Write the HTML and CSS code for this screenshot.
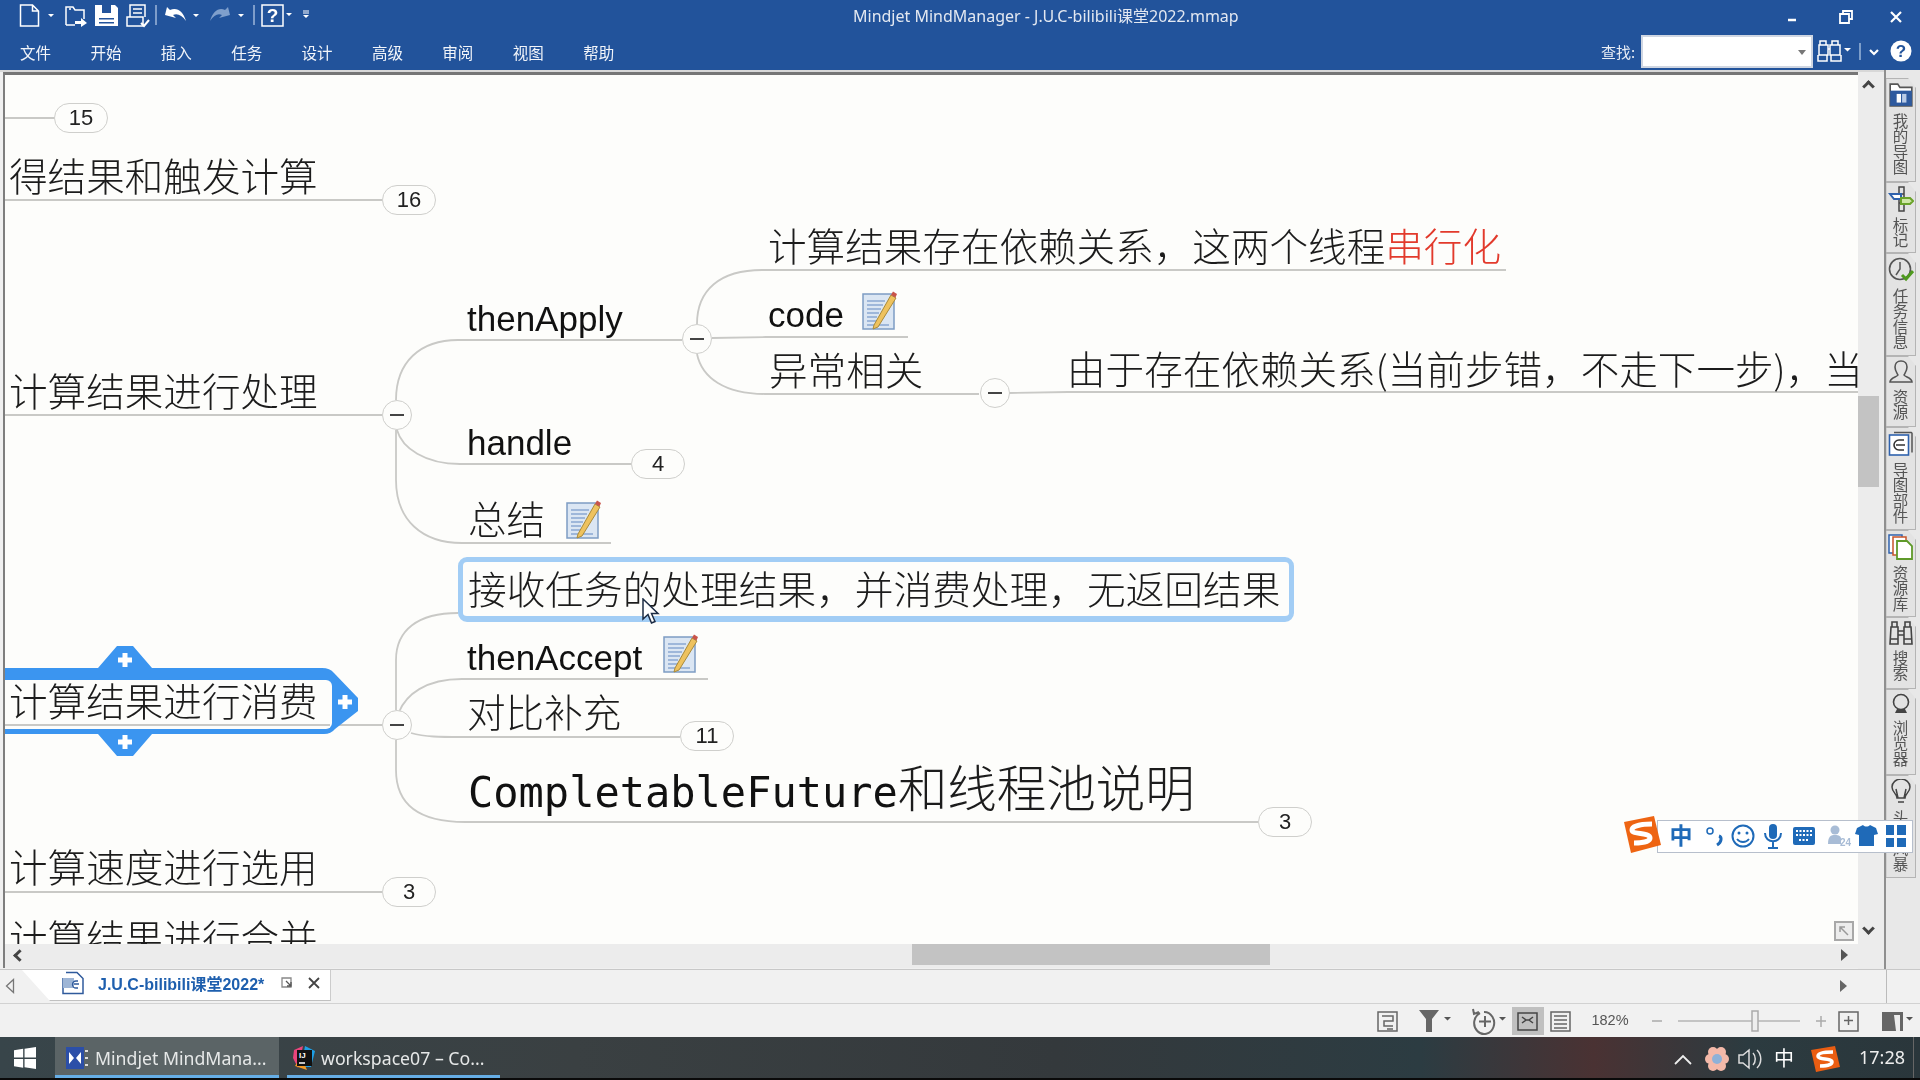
FILE: index.html
```html
<!DOCTYPE html>
<html lang="zh-CN">
<head>
<meta charset="utf-8">
<title>Mindjet MindManager</title>
<link rel="stylesheet" href="styles.css">
</head>
<body>
<svg class="defs" width="0" height="0">
  <symbol id="note" viewBox="0 0 36 40">
    <rect x="1" y="4" width="31" height="35" fill="#dbe6f3" stroke="#7d9cc4" stroke-width="1.5"/>
    <path d="M5 11h18M5 15h16M5 19h14M5 23h12M5 27h10M5 31h10M5 35h22" stroke="#8aa8d2" stroke-width="1.6"/>
    <path d="M12 35 L29 5 L34 8 L16 37 L11 39z" fill="#eec25e" stroke="#a98a3a" stroke-width="1"/>
    <path d="M29 5l2-3.500 4 2.500-1.500 3.500z" fill="#c9544a"/>
  </symbol>
</svg>
<div class="app">
  <header class="ribbon">
    <div class="ribbon-top">
      <svg class="qat" width="320" height="33" viewBox="0 0 320 33">
        <g fill="none" stroke="#fff" stroke-width="1.500">
          <path d="M20.500 5h12l6 6v15h-18zM32.500 5v6h6"/>
          <path d="M66 25V7h7l2 3h9v9M70 10v-2M66 25h9"/>
          <path d="M130 17V5h15v12M133 9h9M133 13h9"/>
          <path d="M127 17h16v9h-16z"/>
          <path d="M156 5v20M254 5v20" stroke="#9db7da"/>
          <rect x="262" y="5" width="21" height="21"/>
        </g>
        <path d="M75 21h6v-3l6 5-6 4v-3h-6z" fill="#fff"/>
        <path d="M95 5h20l3 3v18H95z" fill="#fff"/>
        <path d="M102 5h9v8h-9zM99 18h15v1.500H99zM99 22h15v1.500H99z" fill="#22539b"/>
        <path d="M141 23l3 3 5-6" fill="none" stroke="#fff" stroke-width="2"/>
        <path d="M165 15l2-8 3 3c7-3 13 1 16 11-4-6-9-8-13-6l3 3z" fill="#fff"/>
        <path d="M230 15l-2-8-3 3c-6-3-12 1-15 11 4-6 8-8 12-6l-3 3z" fill="#7f9fcc"/>
        <path d="M48 14h6l-3 3zM193 14h6l-3 3zM238 14h6l-3 3zM286 13h6l-3 3zM303 15h6l-3 3z" fill="#fff"/>
        <path d="M303 11h6M303 13h6" stroke="#fff"/>
        <text class="qat-help" x="272.500" y="22" text-anchor="middle">?</text>
      </svg>
      <div class="app-title">Mindjet MindManager - J.U.C-bilibili课堂2022.mmap</div>
      <svg class="winctl" width="127" height="33" viewBox="0 0 127 33">
        <path d="M0 20h8" stroke="#fff" stroke-width="2.500"/>
        <path d="M52 14h9v9h-9zM55 14v-3h9v8h-3" fill="none" stroke="#fff" stroke-width="1.800"/>
        <path d="M103 12l10 10M113 12l-10 10" stroke="#fff" stroke-width="2.200"/>
      </svg>
    </div>
    <div class="ribbon-menu">
      <nav class="menu">
        <span class="menu-item">文件</span><span class="menu-item">开始</span><span class="menu-item">插入</span><span class="menu-item">任务</span><span class="menu-item">设计</span><span class="menu-item">高级</span><span class="menu-item">审阅</span><span class="menu-item">视图</span><span class="menu-item">帮助</span>
      </nav>
      <div class="search">
        <span class="search-label">查找:</span>
        <div class="search-box"><span class="search-caret"></span></div>
        <svg class="search-tools" width="103" height="37" viewBox="0 0 103 37">
          <g fill="none" stroke="#fff" stroke-width="1.500">
            <path d="M3 8h6v4H3zM15 8h6v4h-6zM2 12h9v10H2zM13 12h10v10H13zM11 16h2M1 22v6h9v-6M14 22v6h10v-6"/>
            <path d="M43 10v17" stroke="#9db7da"/>
            <path d="M53 17l4 4 4-4" stroke-width="2.200"/>
          </g>
          <path d="M27 15h7l-3.500 3.500z" fill="#fff"/>
          <circle cx="84" cy="18" r="10.500" fill="#fff"/>
          <text class="help-q" x="84" y="24" text-anchor="middle">?</text>
        </svg>
      </div>
    </div>
  </header>

  <main class="main">
    <div class="workspace">
      <div class="work-left">
        <div class="canvas">
          <div class="world">
            <svg class="links" width="1920" height="1080" viewBox="0 0 1920 1080">
              <g fill="none" stroke="#c9c9c6" stroke-width="1.800">
                <path d="M5 118H55"/>
                <path d="M5 200H382"/>
                <path d="M5 415H382"/>
                <path d="M5 892H382"/>
                <path d="M338 725H382"/>
                <path d="M396 400C396 362 420 340 458 340H682"/>
                <path d="M397 430C402 448 425 464 460 464H631"/>
                <path d="M396 430V480C396 520 422 543 462 543H611"/>
                <path d="M697 324C697 290 720 270 762 270H1506"/>
                <path d="M712 338L766 337H908"/>
                <path d="M697 354C702 378 725 394 765 394H979"/>
                <path d="M1009 393L1068 392H1860"/>
                <path d="M396 710V660C396 630 418 613 458 613"/>
                <path d="M399 712C406 695 425 679 462 679H708"/>
                <path d="M411 733C425 737 440 737 462 737H680"/>
                <path d="M396 740V770C396 805 420 822 465 822H1258"/>
              </g>
              <path d="M0 668H98L117 646H133L152 668H322Q330 668 334 673L358 698V711L335 729Q331 734 324 734H152L133 756H117L98 734H0z" fill="#3b95f0"/>
              <rect x="0" y="680" width="332" height="49" rx="6" fill="#fdfdfb"/>
              <path d="M5 725H330" stroke="#c9c9c6" stroke-width="1.800"/>
              <path class="plus" d="M125 653v14M118 660h14M125 735v14M118 742h14M345 695v14M338 702h14" stroke="#fff" stroke-width="5" fill="none"/>
            </svg>

            <div class="node n-de">得结果和触发计算</div>
            <div class="node n-chuli">计算结果进行处理</div>
            <div class="node n-xiaofei">计算结果进行消费</div>
            <div class="node n-xuanyong">计算速度进行选用</div>
            <div class="node n-hebing">计算结果进行合并</div>
            <div class="node n-cunzai">计算结果存在依赖关系，这两个线程<span class="red">串行化</span></div>
            <div class="node n-yichang">异常相关</div>
            <div class="node n-youyu">由于存在依赖关系(当前步错，不走下一步)，当前步有异常的话就叫停</div>
            <div class="node n-zongjie">总结</div>
            <div class="node n-duibi">对比补充</div>
            <div class="node latin n-apply">thenApply</div>
            <div class="node latin n-code">code</div>
            <div class="node latin n-handle">handle</div>
            <div class="node latin n-accept">thenAccept</div>
            <div class="node n-future"><span class="mono">CompletableFuture</span><span class="big">和线程池说明</span></div>
            <div class="selected"><span class="node-text">接收任务的处理结果，并消费处理，无返回结果</span></div>

            <svg class="note note-code"><use href="#note"/></svg>
            <svg class="note note-zongjie"><use href="#note"/></svg>
            <svg class="note note-accept"><use href="#note"/></svg>

            <div class="pill p-15">15</div>
            <div class="pill p-16">16</div>
            <div class="pill p-4">4</div>
            <div class="pill p-11">11</div>
            <div class="pill p-3a">3</div>
            <div class="pill p-3b">3</div>

            <div class="toggle t-a"></div>
            <div class="toggle t-b"></div>
            <div class="toggle t-c"></div>
            <div class="toggle t-d"></div>

            <svg class="cursor" width="20" height="28" viewBox="0 0 20 28">
              <path d="M1 1V21L6 16.500L9.500 25L13 23.500L9.500 15.500H16z" fill="#fff" stroke="#1c2c44" stroke-width="1.500"/>
            </svg>
          </div>
          <svg class="corner" width="20" height="20" viewBox="0 0 20 20">
            <rect x="1" y="1" width="18" height="18" fill="#ececec" stroke="#a8a8a8" stroke-width="2"/>
            <path d="M14 14L6 6M6 11V6H11" fill="none" stroke="#999" stroke-width="1.500"/>
          </svg>
        </div>
        <div class="hbar">
          <span class="chev chev-l"></span>
          <div class="hthumb"></div>
          <span class="tri-r"></span>
        </div>
      </div>
      <div class="vbar">
        <span class="chev chev-u"></span>
        <div class="vthumb"></div>
        <span class="chev chev-d"></span>
      </div>
    </div>
    <aside class="dock">
      <div class="dock-tab h104">
        <svg width="26" height="26" viewBox="0 0 24 24"><path d="M2 2h7l2 3h11v17H2z" fill="#fff" stroke="#555" stroke-width="1.500"/><rect x="2" y="8" width="20" height="14" fill="#2e5a9f"/><rect x="8" y="11" width="4" height="8" fill="#fff"/><rect x="13" y="11" width="4" height="8" fill="#b9cbe6"/></svg>
        <span class="dock-label">我的导图</span>
      </div>
      <div class="dock-tab h71">
        <svg width="26" height="26" viewBox="0 0 26 26"><path d="M11 1h5v7h-5zM11 17h5v8h-5zM11 8v9M16 8v9" fill="none" stroke="#444" stroke-width="1.500"/><path d="M2 8h11v5H6z" fill="#fff" stroke="#2f62ad" stroke-width="2"/><path d="M13 12h9l3 3-3 3h-9z" fill="#cfe6a8" stroke="#6aa32a" stroke-width="2"/></svg>
        <span class="dock-label">标记</span>
      </div>
      <div class="dock-tab h103">
        <svg width="26" height="26" viewBox="0 0 26 26"><circle cx="12" cy="12" r="10.500" fill="none" stroke="#555" stroke-width="1.600"/><path d="M12 5v7l-4 6" fill="none" stroke="#555" stroke-width="1.500"/><path d="M14 18l4 4 7-8" fill="none" stroke="#4f9a1f" stroke-width="3"/></svg>
        <span class="dock-label">任务信息</span>
      </div>
      <div class="dock-tab h71">
        <svg width="26" height="24" viewBox="0 0 26 24"><path d="M13 1c4 0 6 3 6 6 0 4-2 6-3 8 1 2 8 3 8 7H2c0-4 7-5 8-7-1-2-3-4-3-8 0-3 2-6 6-6z" fill="none" stroke="#555" stroke-width="1.600"/></svg>
        <span class="dock-label">资源</span>
      </div>
      <div class="dock-tab h103">
        <svg width="26" height="26" viewBox="0 0 26 26"><rect x="1.500" y="4" width="19" height="20" fill="#fff" stroke="#2f62ad" stroke-width="1.600"/><path d="M6 1.500h18v20" fill="none" stroke="#555" stroke-width="1.500"/><path d="M16 9h-5a4 4 0 0 0 0 10h5M8 14h9" fill="none" stroke="#333" stroke-width="1.600"/></svg>
        <span class="dock-label">导图部件</span>
      </div>
      <div class="dock-tab h87">
        <svg width="26" height="26" viewBox="0 0 26 26"><rect x="1" y="1" width="13" height="18" fill="#fff" stroke="#2f62ad" stroke-width="1.500"/><rect x="5" y="3" width="13" height="18" fill="#fff" stroke="#c8542a" stroke-width="1.500"/><path d="M9 7h10l5 5v13H9z" fill="#fff" stroke="#5f9a2a" stroke-width="1.800"/></svg>
        <span class="dock-label">资源库</span>
      </div>
      <div class="dock-tab h72">
        <svg width="24" height="24" viewBox="0 0 24 24"><g fill="none" stroke="#444" stroke-width="1.600"><path d="M3 1h5v5H3zM16 1h5v5h-5zM2 6h7v17H1zM15 6h7l1 17h-8zM9 10h6M9 14h6M1 18h8M15 18h8"/></g></svg>
        <span class="dock-label">搜索</span>
      </div>
      <div class="dock-tab h86">
        <svg width="20" height="22" viewBox="0 0 20 22"><circle cx="10" cy="9" r="7.500" fill="none" stroke="#444" stroke-width="1.600"/><path d="M4 20h12l-2-4H6z" fill="#444"/></svg>
        <span class="dock-label">浏览器</span>
      </div>
      <div class="dock-tab h103">
        <svg width="20" height="26" viewBox="0 0 20 26"><path d="M6 19c0-4-5-6-5-11a9 8 0 0 1 18 0c0 5-5 7-5 11zM7 23h6M7 19l-2-9M13 19l2-9" fill="none" stroke="#444" stroke-width="1.500"/></svg>
        <span class="dock-label">头脑风暴</span>
      </div>
    </aside>
    <div class="sogou">
      <svg class="sogou-logo" width="42" height="40" viewBox="0 0 42 40">
        <path d="M3 7L33 1L40 30L10 38z" fill="#ee6412"/>
        <path d="M31 9C20 9 11 11 11 15C11 20 29 17 29 23C29 27 20 28 13 28" fill="none" stroke="#fff" stroke-width="5"/>
      </svg>
      <svg class="sogou-icons" width="256" height="32" viewBox="0 0 256 32">
        <text class="sg-zhong" x="24" y="24" text-anchor="middle">中</text>
        <circle cx="53" cy="11" r="3" fill="none" stroke="#1f6ab8" stroke-width="1.500"/>
        <path d="M62 16c3 1 3 6-2 9" fill="none" stroke="#1f6ab8" stroke-width="3"/>
        <circle cx="86" cy="16" r="10.500" fill="none" stroke="#1f6ab8" stroke-width="2"/>
        <circle cx="82" cy="13" r="1.500" fill="#1f6ab8"/><circle cx="90" cy="13" r="1.500" fill="#1f6ab8"/>
        <path d="M80 19c3 4 9 4 12 0" fill="none" stroke="#1f6ab8" stroke-width="1.800"/>
        <rect x="112" y="4" width="8" height="15" rx="4" fill="#1f6ab8"/>
        <path d="M108 13c0 11 16 11 16 0M116 22v6M111 28h10" fill="none" stroke="#1f6ab8" stroke-width="2"/>
        <rect x="136" y="7" width="22" height="18" rx="2" fill="#1f6ab8"/>
        <path d="M139 11h16M139 15h16M142 20h10" stroke="#fff" stroke-width="2" stroke-dasharray="2 1.500"/>
        <circle cx="178" cy="10" r="4.500" fill="#a8bcd6"/>
        <path d="M171 24c0-8 3-9 7-9s6 1 6 4v5z" fill="#a8bcd6"/>
        <text class="sg-num" x="183" y="26">24</text>
        <path d="M200 8l6-3c2 2 5 2 7 0l6 3 2 6-4 1v11h-15V15l-4-1z" fill="#1f6ab8"/>
        <path d="M229 5h8v10h-8zM240 5h9v10h-9zM229 18h8v9h-8zM240 18h9v9h-9z" fill="#1f6ab8"/>
      </svg>
    </div>
  </main>

  <div class="tabrow">
    <div class="tabrow-left">
      <svg class="tri-l" width="10" height="16" viewBox="0 0 10 16"><path d="M8.500 1.500L1.500 8l7 6.500z" fill="none" stroke="#777" stroke-width="1.300"/></svg>
    </div>
    <div class="doc-tab">
      <svg class="doc-icon" width="24" height="24" viewBox="0 0 24 24"><path d="M4 1.500h11l6 6v15H1V7" fill="#fff" stroke="#2f5a9c" stroke-width="1.500"/><path d="M1 7h11v10H1z" fill="#9db5d6"/><path d="M16 10h-2a3 3 0 0 0 0 7h2M12 13h5" fill="none" stroke="#2f5a9c" stroke-width="1.300"/></svg>
      <span class="doc-name">J.U.C-bilibili课堂2022*</span>
      <svg class="doc-ctl" width="44" height="14" viewBox="0 0 44 14"><path d="M1 2h9v9H1z" fill="none" stroke="#888" stroke-width="1.300"/><path d="M5 5l5 5M6 10h4V6" fill="none" stroke="#555" stroke-width="1.300"/><path d="M28 2l10 10M38 2L28 12" stroke="#444" stroke-width="1.800"/></svg>
    </div>
    <div class="tabrow-fill"></div>
    <span class="tri-r tri-tab"></span>
    <span class="tabrow-sep"></span>
  </div>

  <div class="statusbar">
    <svg class="status-tools" width="560" height="33" viewBox="0 0 560 33">
      <g fill="none" stroke="#666" stroke-width="1.500">
        <path d="M18 8h19v19H18zM22 12h11v5h-9v5h9M27 25h6"/>
        <path d="M120 9a10 11 0 1 0 4-1M113 5l1 5 5-2M125 12v11M119 17.500h12" stroke-width="2"/>
        <path d="M158 9h19v17h-19zM162 13l4 3-4 3M173 13l-4 3 4 3M166 16h3" stroke="#555"/>
        <path d="M191 8h19v19h-19zM194 12h13M194 16h13M194 20h13M194 24h13"/>
        <path d="M479 8h19v19h-19zM488.500 12v9M484 16.500h9"/>
      </g>
      <path d="M59 6h20l-7 9v13l-6 0V15z" fill="#666"/>
      <path d="M84 13h7l-3.500 3.500zM139 13h7l-3.500 3.500zM546 13h7l-3.500 3.500z" fill="#555"/>
      <rect x="152" y="3" width="32" height="28" fill="#cbcbcb" class="active-view"/>
      <text class="zoom-pct" x="250" y="21" text-anchor="middle">182%</text>
      <path d="M292 17h10M461 12v11M456 17h10" stroke="#aaa" stroke-width="1.500"/>
      <path d="M318 17H440" stroke="#b5b5b5" stroke-width="1.500"/>
      <rect x="392" y="7" width="6" height="20" fill="#eee" stroke="#aaa" stroke-width="1.500"/>
      <path d="M522 8h21v19h-21z" fill="#666"/><path d="M534 11h6v16h-4z" fill="#eee"/>
    </svg>
  </div>

  <footer class="taskbar">
    <div class="start">
      <svg width="22" height="22" viewBox="0 0 24 24"><path d="M0 3.500L10 2v9.500H0zM11.500 1.800L24 0v11.500H11.500zM0 13h10v9.500L0 21zM11.500 13H24v11l-12.500-1.800z" fill="#fff"/></svg>
    </div>
    <div class="task task-on">
      <svg width="22" height="22" viewBox="0 0 22 22"><rect width="18" height="22" fill="#2c4fa8"/><path d="M3 5l5 6-5 6zM15 5l-5 6 5 6z" fill="#fff"/><path d="M19 4h3M19 11h3M19 18h3" stroke="#ddd" stroke-width="2"/></svg>
      <span>Mindjet MindMana...</span>
    </div>
    <div class="task task-ws">
      <svg width="22" height="24" viewBox="0 0 22 24"><path d="M1 4L10 0 5 22 0 12z" fill="#e9447c"/><path d="M12 0l10 5-4 16H8z" fill="#1d9fe6"/><path d="M2 20L8 10 14 24z" fill="#f59a23"/><rect x="4" y="4" width="15" height="16" fill="#111"/><path d="M6 17h6" stroke="#fff" stroke-width="1.500"/><text class="ij" x="6" y="12">IJ</text></svg>
      <span>workspace07 – Co...</span>
    </div>
    <div class="tray">
      <svg class="tray-icons" width="182" height="41" viewBox="0 0 182 41">
        <path d="M-8 27l8-8 8 8" fill="none" stroke="#eee" stroke-width="1.800"/>
        <g fill="#f4b9a9"><circle cx="30" cy="15" r="5"/><circle cx="38" cy="15" r="5"/><circle cx="27" cy="22" r="5"/><circle cx="41" cy="22" r="5"/><circle cx="30" cy="29" r="5"/><circle cx="38" cy="29" r="5"/></g>
        <circle cx="34" cy="22" r="5" fill="#8eb1d8"/>
        <path d="M56 18h4l6-5v18l-6-5h-4zM70 16c3 3 3 9 0 12M74 13c5 5 5 13 0 18" fill="none" stroke="#ddd" stroke-width="1.500"/>
        <text class="tray-zh" x="101" y="29" text-anchor="middle">中</text>
        <path d="M128 13L152 9L157 30L133 35z" fill="#ea5d12"/>
        <path d="M150 15C142 15 135 16 135 19C135 23 149 21 149 25C149 28 142 29 137 29" fill="none" stroke="#fff" stroke-width="3.500"/>
      </svg>
      <span class="clock">17:28</span>
      <span class="desk-line"></span>
    </div>
  </footer>
</div>
</body>
</html>
```

FILE: styles.css
```css
* { box-sizing: border-box; }
html, body { margin: 0; padding: 0; width: 1920px; height: 1080px; overflow: hidden; background: #f0f0f0; }
body { font-family: "Noto Sans CJK SC", "Noto Sans", sans-serif; }
.defs { position: absolute; }
.app { display: flex; flex-direction: column; width: 1920px; height: 1080px; }

/* ribbon */
.ribbon { height: 70px; background: #22539b; color: #fff; flex: none; }
.ribbon-top { display: flex; height: 33px; }
.qat { flex: none; }
.qat-help { font: bold 19px "Liberation Sans", sans-serif; fill: #fff; }
.app-title { margin-left: 533px; font: 16px/33px "Noto Sans", "Noto Sans CJK SC", sans-serif; color: #e3e8f1; white-space: nowrap; }
.winctl { margin-left: auto; margin-right: 5px; flex: none; }
.ribbon-menu { display: flex; height: 37px; align-items: center; }
.menu { display: flex; padding-left: 20px; }
.menu-item { width: 70.4px; font-size: 15.5px; color: #f2f5fa; }
.search { margin-left: auto; display: flex; align-items: center; }
.search-label { font-size: 15px; color: #e8edf5; width: 40px; }
.search-box { width: 172px; height: 33px; background: #fff; border: 2px solid #cfd6e2; position: relative; }
.search-caret { position: absolute; right: 5px; top: 13px; border: 4px solid transparent; border-top: 5px solid #777; border-bottom: 0; }
.search-tools { flex: none; display: block; margin-left: 4px; }
.help-q { font: bold 17px "Liberation Sans", sans-serif; fill: #22539b; }

/* main */
.main { display: flex; height: 899px; flex: none; position: relative; }
.workspace { display: flex; width: 1884px; flex: none; border-top: 2px solid #d8d8d8; }
.work-left { width: 1858px; flex: none; display: flex; flex-direction: column; padding-left: 3px; background: #f0f0f0; }
.canvas { position: relative; flex: 1; overflow: hidden; background: #fdfdfb; border-left: 2px solid #7e7e7e; border-top: 3px solid #767676; }
.world { position: absolute; left: -5px; top: -75px; width: 1920px; height: 1080px; }
.links { position: absolute; left: 0; top: 0; }
.node { position: absolute; font-size: 38.6px; line-height: 46px; font-weight: 300; color: #1c1c1c; white-space: nowrap; }
.red { color: #e23a2c; }
.latin { font-family: "Liberation Sans", sans-serif; font-size: 35px; font-weight: 400; color: #111; }
.n-de { left: 9px; top: 151px; }
.n-chuli { left: 9px; top: 366px; }
.n-xiaofei { left: 9px; top: 676px; }
.n-xuanyong { left: 9px; top: 842px; }
.n-hebing { left: 9px; top: 913px; }
.n-cunzai { left: 768px; top: 221px; }
.n-yichang { left: 769px; top: 345px; }
.n-youyu { left: 1067px; top: 344px; }
.n-zongjie { left: 468px; top: 494px; }
.n-duibi { left: 467px; top: 687px; }
.n-apply { left: 467px; top: 296px; }
.n-code { left: 768px; top: 292px; }
.n-handle { left: 467px; top: 420px; }
.n-accept { left: 467px; top: 635px; }
.n-future { left: 468px; top: 756px; line-height: 60px; }
.mono { font-family: "DejaVu Sans Mono", monospace; font-size: 42px; color: #111; }
.big { font-size: 49.5px; }
.selected { position: absolute; left: 458px; top: 557px; width: 836px; height: 65px; border: 5px solid #a2cdf5; border-bottom-width: 6px; border-radius: 9px; background: #fdfdfb; }
.node-text { position: absolute; left: 5px; top: 0; font-size: 38.7px; line-height: 50px; font-weight: 300; color: #1c1c1c; white-space: nowrap; }
.note { position: absolute; width: 36px; height: 40px; }
.note-code { left: 862px; top: 290px; }
.note-zongjie { left: 566px; top: 499px; }
.note-accept { left: 663px; top: 633px; }
.pill { position: absolute; width: 54px; height: 30px; border: 1.5px solid #cfcfcc; border-radius: 15px; background: #fdfdfb; display: flex; align-items: center; justify-content: center; font: 22px "Liberation Sans", sans-serif; color: #222; }
.p-15 { left: 54px; top: 103px; }
.p-16 { left: 382px; top: 185px; }
.p-4 { left: 631px; top: 449px; }
.p-11 { left: 680px; top: 721px; }
.p-3a { left: 1258px; top: 807px; }
.p-3b { left: 382px; top: 877px; }
.toggle { position: absolute; width: 30px; height: 30px; border: 1.5px solid #cfcfcc; border-radius: 50%; background: #fdfdfb; display: flex; align-items: center; justify-content: center; }
.toggle::after { content: ""; width: 14px; height: 2px; background: #444; }
.t-a { left: 382px; top: 400px; }
.t-b { left: 682px; top: 324px; }
.t-c { left: 980px; top: 378px; }
.t-d { left: 382px; top: 710px; }
.cursor { position: absolute; left: 642px; top: 598px; }
.corner { position: absolute; right: 4px; bottom: 3px; }

.hbar { height: 24px; flex: none; background: #ececec; position: relative; display: flex; align-items: center; border-left: 2px solid #7e7e7e; margin-bottom: 1px; }
.hthumb { position: absolute; left: 907px; top: 0; width: 358px; height: 21px; background: #c3c3c3; }
.chev { display: block; width: 9px; height: 9px; border-left: 3px solid #444; border-top: 3px solid #444; }
.chev-l { transform: rotate(-45deg); margin-left: 10px; margin-top: -2px; }
.chev-u { transform: rotate(45deg); position: absolute; left: 6px; top: 10px; }
.chev-d { transform: rotate(225deg); position: absolute; left: 6px; top: 852px; }
.tri-r { width: 0; height: 0; border: 6px solid transparent; border-left: 7px solid #555; border-right: 0; position: absolute; right: 10px; top: 5px; }
.vbar { width: 26px; background: #ececec; flex: none; position: relative; }
.vthumb { position: absolute; left: 0; top: 324px; width: 21px; height: 91px; background: #c3c3c3; }

/* dock */
.dock { width: 36px; flex: none; border-left: 2px solid #8f8f8f; background: #e8e8e8; padding-top: 8px; display: flex; flex-direction: column; }
.dock-tab { width: 30px; background: #e3e3e3; border: 1px solid #b4b4b4; border-left: 0; box-shadow: inset 1px 0 #d0d0d0; clip-path: polygon(0 0, 22px 0, 100% 10px, 100% 100%, 0 100%); display: flex; flex-direction: column; align-items: center; padding-top: 3px; gap: 5px; overflow: hidden; }
.h104 { height: 104px; }
.h103 { height: 103px; }
.h87 { height: 87px; }
.h86 { height: 86px; }
.h72 { height: 72px; }
.h71 { height: 71px; }
.dock-label { writing-mode: vertical-rl; text-orientation: upright; font-size: 15.5px; line-height: 18px; letter-spacing: 0; color: #555; }

/* sogou */
.sogou { position: absolute; left: 1657px; top: 750px; width: 256px; height: 33px; background: #fff; border: 1px solid #b7bfcc; display: block; }
.sogou-logo { position: absolute; left: -37px; top: -6px; }
.sogou-icons { display: block; position: absolute; left: -1px; top: -1px; }
.sg-zhong { font: bold 23px "Noto Sans CJK SC", sans-serif; fill: #1f6ab8; }
.sg-num { font: bold 10px "Liberation Sans", sans-serif; fill: #a8bcd6; }

/* tabs */
.tabrow { height: 35px; flex: none; display: flex; position: relative; background: #f1f1f1; border-top: 1px solid #c8c8c8; border-bottom: 1px solid #d2d2d2; }
.tabrow-left { width: 22px; flex: none; position: relative; }
.tri-l { position: absolute; left: 5px; top: 8px; }
.doc-tab { width: 309px; height: 31px; background: #fff; clip-path: polygon(0 0, 100% 0, 100% 100%, 28px 100%); border-right: 1px solid #ccc; border-bottom: 1px solid #c0c0c0; display: flex; align-items: center; padding-left: 40px; padding-bottom: 5px; flex: none; }
.doc-icon { flex: none; }
.doc-name { margin-left: 12px; width: 180px; font: bold 16px "Liberation Sans", "Noto Sans CJK SC", sans-serif; color: #1e5fae; white-space: nowrap; }
.doc-ctl { margin-left: 3px; flex: none; }
.tabrow-fill { flex: 1; }
.tri-tab { right: 73px; top: 10px; border-width: 6px 0 6px 7px; border-left-color: #666; }
.tabrow-sep { position: absolute; left: 1886px; top: 0; bottom: 0; width: 1px; background: #bbb; }

/* status */
.statusbar { height: 33px; flex: none; background: #f1f1f1; display: flex; justify-content: flex-end; }
.status-tools { flex: none; }
.zoom-pct { font: 14.5px "Liberation Sans", sans-serif; fill: #555; }
.active-view { mix-blend-mode: multiply; }

/* taskbar */
.taskbar { height: 43px; flex: none; display: flex; border-bottom: 2px solid #0a0a0a; color: #eee; background: linear-gradient(90deg, #38454a 0%, #3a4042 30%, #34393c 55%, #2c3c42 74%, #4a3233 83%, #2c3b40 91%, #2a363b 100%); }
.start { width: 55px; flex: none; display: flex; align-items: center; padding-left: 14px; }
.task { width: 213px; margin-right: 8px; flex: none; display: flex; align-items: center; gap: 6px; padding-left: 6px; padding-top: 4px; border-bottom: 3px solid #66aee6; font: 17.7px "Noto Sans", sans-serif; color: #e6e8e8; white-space: nowrap; }
.task-on { width: 224px; background: #5b6466; padding-left: 11px; gap: 7px; }
.ij { font: bold 8px "Liberation Sans", sans-serif; fill: #fff; }
.tray { margin-left: auto; display: flex; align-items: center; position: relative; width: 246px; padding-left: 9px; }
.tray-icons { overflow: visible; }
.tray-zh { font: 20px "Noto Sans CJK SC", sans-serif; fill: #fff; }
.clock { position: absolute; left: 185px; top: 8px; font: 18px "Noto Sans", sans-serif; color: #eee; }
.desk-line { position: absolute; right: 6px; top: 0; bottom: 0; width: 1px; background: #666; }
```
